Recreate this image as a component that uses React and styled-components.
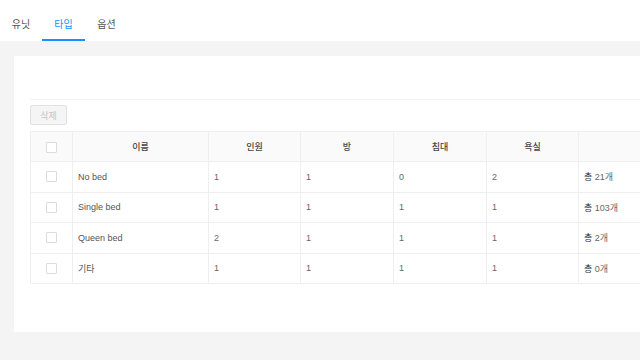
import React from "react";
import styled, { createGlobalStyle } from "styled-components";

const Global = createGlobalStyle`
  html, body { margin: 0; padding: 0; }
  body {
    background: #f4f4f4;
    font-family: "Noto Sans CJK KR", "Noto Sans", sans-serif;
    overflow: hidden;
    width: 640px;
    height: 360px;
  }
`;

const Page = styled.div`
  width: 640px;
  min-height: 360px;
  background: #f4f4f4;
  overflow: hidden;
`;

const TabBar = styled.nav`
  display: flex;
  height: 41px;
  background: #fff;
  padding-left: 0;
`;

const Tab = styled.div`
  width: 43px;
  display: flex;
  align-items: center;
  justify-content: center;
  font-size: 10px;
  color: ${(p) => (p.$active ? "#1890ff" : "#555")};
  border-bottom: 2px solid ${(p) => (p.$active ? "#1890ff" : "transparent")};
  box-sizing: border-box;
  padding-top: 8px;
  flex-shrink: 0;
  &:first-child { width: 42px; }
`;

const Body = styled.div`
  padding: 15px 0 0 14px;
`;

const Card = styled.section`
  width: 626px;
  height: 276px;
  background: #fff;
  padding: 0 0 0 16px;
  box-sizing: border-box;
`;

const CardHead = styled.div`
  height: 43px;
  border-bottom: 1px solid #f2f2f2;
`;

const Toolbar = styled.div`
  padding: 5px 0 6px;
`;

const DeleteButton = styled.button`
  width: 37px;
  height: 20px;
  background: #f5f5f5;
  border: 1px solid #e2e2e2;
  border-radius: 2px;
  color: #c4c4c4;
  font-family: inherit;
  font-size: 9px;
  padding: 0;
  display: block;
`;

const Table = styled.table`
  border-collapse: collapse;
  table-layout: fixed;
  width: 611px;
  font-size: 9px;
`;

const Th = styled.th`
  height: 30px;
  padding: 0;
  background: #fafafa;
  font-weight: 500;
  color: #444;
  text-align: center;
  border: 1px solid #efefef;
  box-sizing: border-box;
`;

const Td = styled.td`
  height: 30.5px;
  padding: 0 0 0 ${(p) => (p.$check ? 0 : 5)}px;
  text-align: ${(p) => (p.$check ? "center" : "left")};
  color: ${(p) => p.$color || "#666"};
  border: 1px solid #efefef;
  box-sizing: border-box;
  font-family: "Liberation Sans", "Noto Sans CJK KR", sans-serif;
  white-space: nowrap;
`;

const Check = styled.span`
  display: inline-block;
  width: 9px;
  height: 9px;
  border: 1px solid #dcdcdc;
  border-radius: 1px;
  background: #fff;
  vertical-align: middle;
`;

const Total = styled.span`
  color: #333;
  font-family: "Noto Sans CJK KR", sans-serif;
`;

const rows = [
  { name: "No bed", p: 1, r: 1, b: 0, t: 2, n: 21 },
  { name: "Single bed", p: 1, r: 1, b: 1, t: 1, n: 103 },
  { name: "Queen bed", p: 2, r: 1, b: 1, t: 1, n: 2 },
  { name: "기타", p: 1, r: 1, b: 1, t: 1, n: 0 },
];

export default function App() {
  return (
    <Page>
      <Global />
      <TabBar>
        <Tab>유닛</Tab>
        <Tab $active>타입</Tab>
        <Tab>옵션</Tab>
      </TabBar>
      <Body>
        <Card>
          <CardHead />
          <Toolbar>
            <DeleteButton disabled>삭제</DeleteButton>
          </Toolbar>
          <Table>
            <colgroup>
              <col style={{ width: 42 }} />
              <col style={{ width: 136 }} />
              <col style={{ width: 92 }} />
              <col style={{ width: 93 }} />
              <col style={{ width: 93 }} />
              <col style={{ width: 92 }} />
              <col />
            </colgroup>
            <thead>
              <tr>
                <Th><Check /></Th>
                <Th>이름</Th>
                <Th>인원</Th>
                <Th>방</Th>
                <Th>침대</Th>
                <Th>욕실</Th>
                <Th />
              </tr>
            </thead>
            <tbody>
              {rows.map((r) => (
                <tr key={r.name}>
                  <Td $check><Check /></Td>
                  <Td $color="#555">{r.name}</Td>
                  <Td>{r.p}</Td>
                  <Td>{r.r}</Td>
                  <Td>{r.b}</Td>
                  <Td>{r.t}</Td>
                  <Td><Total>총</Total> {r.n}개</Td>
                </tr>
              ))}
            </tbody>
          </Table>
        </Card>
      </Body>
    </Page>
  );
}
